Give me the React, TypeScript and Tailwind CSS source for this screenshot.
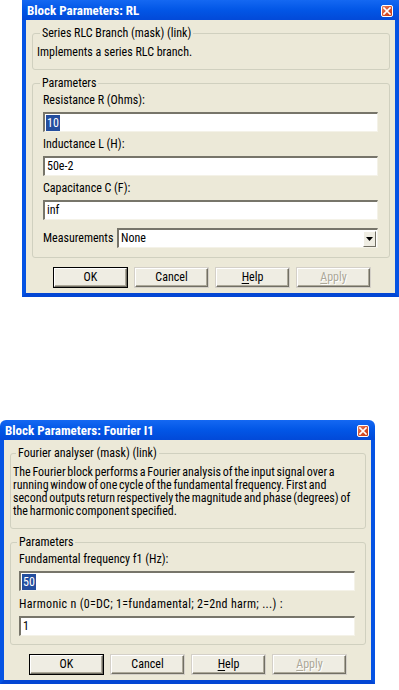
import type { ReactNode } from 'react';

const font = "font-['Roboto_Condensed','Liberation_Sans',Arial,sans-serif]";

const CloseBox = () => (
  <div className="w-[12px] h-[12px] rounded-[2px] border border-white bg-gradient-to-br from-[#E8825F] via-[#D9522C] to-[#C23A14] flex items-center justify-center">
    <svg width="8" height="8" viewBox="0 0 8 8">
      <path d="M1 1 L7 7 M7 1 L1 7" stroke="white" strokeWidth="1.7" strokeLinecap="square" />
    </svg>
  </div>
);

const Dialog = ({ title, className, titleClass, children }: { title: string; className: string; titleClass?: string; children: ReactNode }) => {
  return (
    <div className={`flex flex-col ${font} text-[12px] leading-[13px] text-black ${className}`}>
      <div className={`h-[20px] pt-[1px] flex items-center justify-between pl-[5px] pr-[6px] bg-gradient-to-b from-[#1468F2] via-[#0256E6] to-[#0249D8] ${titleClass ?? ''}`}>
        <span className="text-white font-bold text-[13px]">{title}</span>
        <CloseBox />
      </div>
      <div className="bg-[#ECE9D8] border-x-4 border-b-4 border-x-[#0553E3] border-b-[#0346D4] pl-[6px] pr-[5px] pt-[7px] pb-[5px]">
        {children}
      </div>
    </div>
  );
};

const Group = ({ label, className, children }: { label: string; className: string; children: ReactNode }) => (
  <fieldset className={`border border-[#D0D0BF] rounded-[3px] ${className}`}>
    <legend className="px-[2px] leading-[13px]">{label}</legend>
    {children}
  </fieldset>
);

const TextBox = ({ value, selected }: { value: string; selected?: boolean }) => (
  <div className="h-[20px] bg-white border-t-2 border-l-2 border-t-[#77756A] border-l-[#77756A] border-b border-r border-b-[#F4F2E8] border-r-[#F4F2E8] flex items-center pl-[1px]">
    <span className={selected ? 'bg-[#244E9E] text-white px-[1px] leading-[16px]' : 'px-[1px]'}>{value}</span>
  </div>
);

const Button = ({ children, primary, disabled }: { children: ReactNode; primary?: boolean; disabled?: boolean }) => (
  <div className={`w-[75px] h-[21px] ${primary ? 'border border-black' : 'border border-[#D4D0C8]'}`}>
    <div className="h-full border-t border-l border-t-white border-l-white border-b border-r border-b-[#716F64] border-r-[#716F64] bg-[#EFEDE3] shadow-[inset_-1px_-1px_0_#ACA899] flex items-center justify-center">
      <span className={disabled ? 'text-[#ACA899] [text-shadow:1px_1px_0_#fff]' : ''}>{children}</span>
    </div>
  </div>
);

const Buttons = () => (
  <div className="mt-[9px] mr-[19px] flex justify-end gap-[6px]">
    <Button primary>OK</Button>
    <Button>Cancel</Button>
    <Button>
      <u className="underline-offset-2">H</u>elp
    </Button>
    <Button disabled>
      <u className="underline-offset-2">A</u>pply
    </Button>
  </div>
);

const Dropdown = ({ value }: { value: string }) => (
  <div className="flex-1 h-[20px] bg-white border-t-2 border-l-2 border-t-[#77756A] border-l-[#77756A] border-b border-r border-b-[#F4F2E8] border-r-[#F4F2E8] flex items-center justify-between pl-[2px] pr-[1px]">
    <span>{value}</span>
    <div className="w-[13px] h-[16px] bg-[#EFEDE3] border-t border-l border-white border-b border-r border-b-[#716F64] border-r-[#716F64] flex items-center justify-center">
      <svg width="7" height="4" viewBox="0 0 7 4">
        <path d="M0 0 H7 L3.5 4 Z" fill="black" />
      </svg>
    </div>
  </div>
);

export default function App() {
  return (
    <div className="w-[399px] h-[690px] bg-white overflow-hidden">
      <Dialog title="Block Parameters: RL" className="ml-[22px] w-[377px]">
        <Group label="Series RLC Branch (mask) (link)" className="pl-[4px] pr-[4px] pt-[6px] pb-[10px] [&>legend]:ml-[3px]">
          <p>Implements a series RLC branch.</p>
        </Group>
        <Group label="Parameters" className="mt-[7px] pl-[10px] pr-[11px] pt-[4px] pb-[9px] [&>legend]:-ml-[3px]">
          <p>Resistance R (Ohms):</p>
          <div className="mt-[5px]">
            <TextBox value="10" selected />
          </div>
          <p className="mt-[6px]">Inductance L (H):</p>
          <div className="mt-[5px]">
            <TextBox value="50e-2" />
          </div>
          <p className="mt-[6px]">Capacitance C (F):</p>
          <div className="mt-[5px]">
            <TextBox value="inf" />
          </div>
          <div className="mt-[8px] flex items-center">
            <span className="w-[74px]">Measurements</span>
            <Dropdown value="None" />
          </div>
        </Group>
        <Buttons />
      </Dialog>

      <Dialog title="Block Parameters: Fourier I1" className="mt-[123px] w-[375px]" titleClass="rounded-t-[6px]">
        <Group label="Fourier analyser (mask) (link)" className="pl-[2px] pr-[4px] pt-[6px] pb-[10px] [&>legend]:ml-[3px]">
          <p className="[word-spacing:-1px]">
            The Fourier block performs a Fourier analysis of the input signal over a<br />
            running window of one cycle of the fundamental frequency. First and<br />
            second outputs return respectively the magnitude and phase (degrees) of<br />
            the harmonic component specified.
          </p>
        </Group>
        <Group label="Parameters" className="mt-[7px] pl-[8px] pr-[10px] pt-[4px] pb-[8px] [&>legend]:-ml-[2px]">
          <p>Fundamental frequency f1 (Hz):</p>
          <div className="mt-[5px]">
            <TextBox value="50" selected />
          </div>
          <p className="mt-[7px] tracking-[0.3px]">Harmonic n (0=DC; 1=fundamental; 2=2nd harm; ...) :</p>
          <div className="mt-[5px]">
            <TextBox value="1" />
          </div>
        </Group>
        <Buttons />
      </Dialog>
    </div>
  );
}
